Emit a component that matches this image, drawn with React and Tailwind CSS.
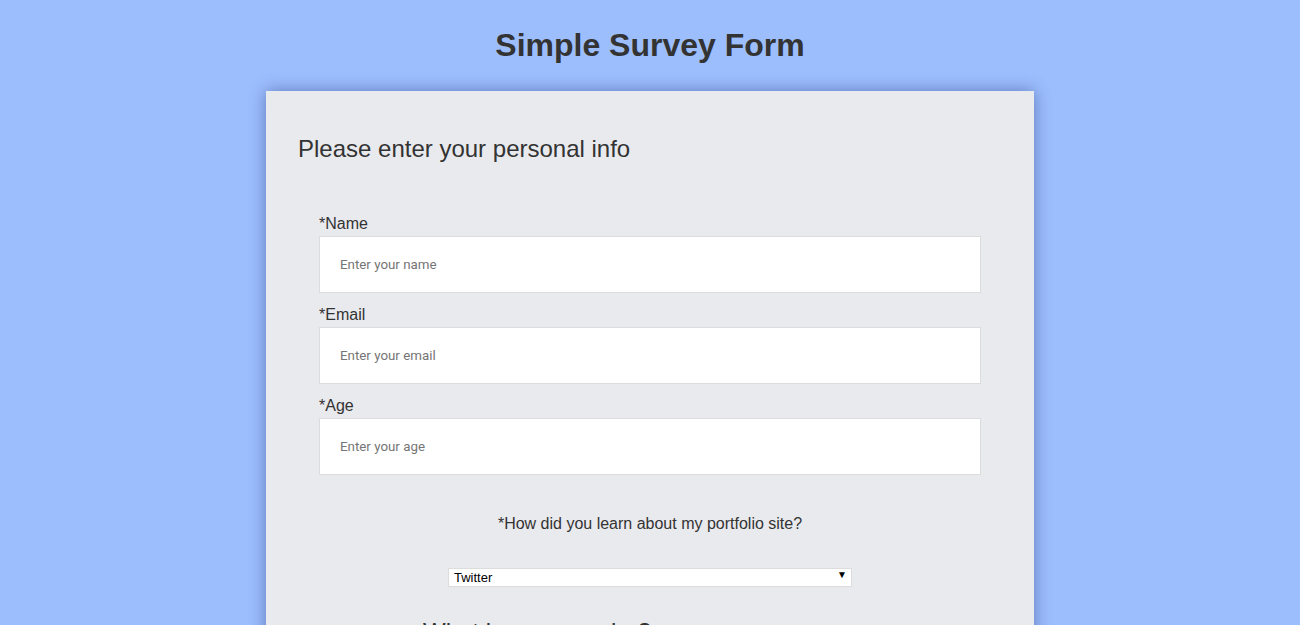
import React from "react";

export default function App() {
  return (
    <div className="min-h-screen bg-[#9dbefd] pt-[26px] font-['Liberation_Sans',Arial,sans-serif] text-[#333]">
      <h1 className="text-center text-[32px] font-bold leading-[38px] text-[#333]">Simple Survey Form</h1>
      <div className="mx-auto mt-[27px] w-[768px] bg-[#e9eaee] pb-10 pt-[44px] shadow-[0_0_16px_rgba(20,40,110,0.45)]">
        <h2 className="px-8 text-[24px] leading-[28px]">Please enter your personal info</h2>
        <div className="mx-[53px] mt-[52px] flex flex-col gap-[13px]">
          {[
            ["*Name", "Enter your name"],
            ["*Email", "Enter your email"],
            ["*Age", "Enter your age"],
          ].map(([label, ph]) => (
            <div key={label} className="flex flex-col">
              <label className="text-[16px] leading-[18px]">{label}</label>
              <input
                placeholder={ph}
                className="mt-[3px] h-[57px] w-full border border-[#dcdcdc] bg-white pl-5 font-['Roboto',sans-serif] text-[13.33px] text-[#333] outline-none placeholder:text-[#757575]"
              />
            </div>
          ))}
        </div>
        <p className="mt-[40px] text-center text-[16px] leading-[18px]">*How did you learn about my portfolio site?</p>
        <div className="relative mx-auto mt-[32px] h-[19px] w-[404px]">
          <select className="h-full w-full appearance-none border border-[#dcdcdc] bg-white pl-[5px] text-[13px] leading-[17px] text-black outline-none">
            <option>Twitter</option>
            <option>LinkedIn</option>
            <option>GitHub</option>
            <option>Other</option>
          </select>
          <span className="pointer-events-none absolute right-[5px] top-[3px] text-[10px] leading-[14px] text-black">▼</span>
        </div>
        <p className="ml-[157px] mt-[34px] text-[24px] leading-[28px]">What is your gender?</p>
      </div>
    </div>
  );
}
